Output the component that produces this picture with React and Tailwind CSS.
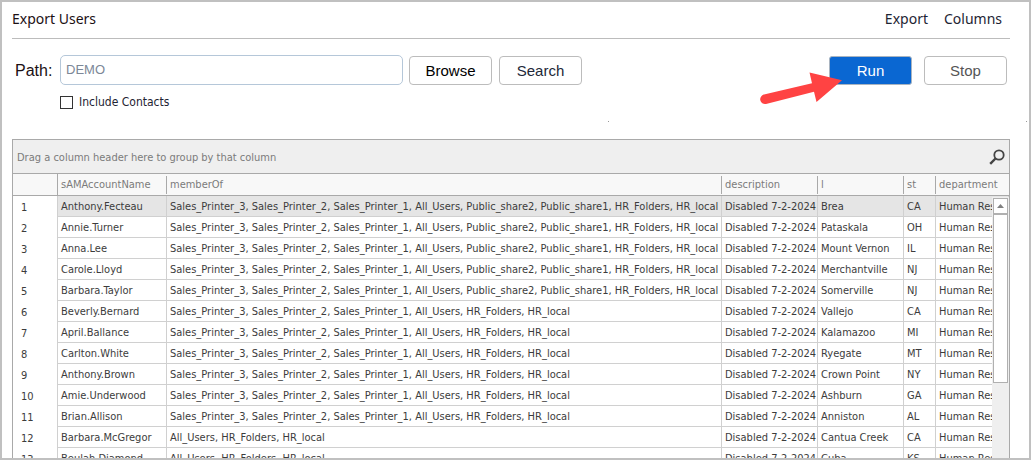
import React from 'react';

const PRINTERS = 'Sales_Printer_3, Sales_Printer_2, Sales_Printer_1, All_Users, ';
const HR = 'HR_Folders, HR_local';
const FULL = `${PRINTERS}Public_share2, Public_share1, ${HR}`;
const STAFF = `${PRINTERS}${HR}`;
const BASIC = `All_Users, ${HR}`;

const users = [
  { name: 'Anthony.Fecteau', memberOf: FULL, city: 'Brea', st: 'CA' },
  { name: 'Annie.Turner', memberOf: FULL, city: 'Pataskala', st: 'OH' },
  { name: 'Anna.Lee', memberOf: FULL, city: 'Mount Vernon', st: 'IL' },
  { name: 'Carole.Lloyd', memberOf: FULL, city: 'Merchantville', st: 'NJ' },
  { name: 'Barbara.Taylor', memberOf: FULL, city: 'Somerville', st: 'NJ' },
  { name: 'Beverly.Bernard', memberOf: STAFF, city: 'Vallejo', st: 'CA' },
  { name: 'April.Ballance', memberOf: STAFF, city: 'Kalamazoo', st: 'MI' },
  { name: 'Carlton.White', memberOf: STAFF, city: 'Ryegate', st: 'MT' },
  { name: 'Anthony.Brown', memberOf: STAFF, city: 'Crown Point', st: 'NY' },
  { name: 'Amie.Underwood', memberOf: STAFF, city: 'Ashburn', st: 'GA' },
  { name: 'Brian.Allison', memberOf: STAFF, city: 'Anniston', st: 'AL' },
  { name: 'Barbara.McGregor', memberOf: BASIC, city: 'Cantua Creek', st: 'CA' },
  { name: 'Beulah.Diamond', memberOf: BASIC, city: 'Cuba', st: 'KS' },
];

const columns = ['sAMAccountName', 'memberOf', 'description', 'l', 'st', 'department'];

const ArrowPointer = () => (
  <svg className="absolute -left-[70px] top-[14px] w-[86px] h-9 pointer-events-none" viewBox="0 0 86 36" aria-hidden="true">
    <path
      d="M5 24.6 L53 13.2 L50.5 2.5 L83 10.3 L57.5 32 L55 21.8 L7 34 A4.8 4.8 0 0 1 5 24.6 Z"
      fill="#ff4343"
    />
  </svg>
);

const Cell = ({ children }) => (
  <td className="h-[21px] border-r border-b border-[#d0d0d0] px-[3px] pt-0.5 pb-0 whitespace-nowrap overflow-hidden">
    {children}
  </td>
);

const Toolbar = () => (
  <div className="flex items-start pl-[3px] pr-[3px] pt-4 font-['Liberation_Sans',Arial,sans-serif]">
    <label htmlFor="path" className="w-[45px] shrink-0 text-[16px] leading-[32px] text-[#1c1014]">
      Path:
    </label>
    <div className="w-[343px] shrink-0">
      <input
        id="path"
        type="text"
        defaultValue="DEMO"
        className="block w-full h-[30px] rounded-[5px] border border-[#b5c7d9] bg-white px-[5px] pb-0.5 text-[13px] text-[#7c8797] outline-none"
      />
      <label className="mt-2 flex items-center gap-1.5 h-[18px] text-[12px] text-[#1e2433] font-['DejaVu_Sans_Condensed','Noto_Sans',sans-serif]">
        <input type="checkbox" className="appearance-none w-[13px] h-[13px] border border-[#333] bg-white checked:bg-[#0a67d2]" />
        Include Contacts
      </label>
    </div>
    <button type="button" className="ml-1.5 mt-px w-[83px] h-[29px] shrink-0 rounded-[4px] border border-[#bcbcbc] bg-white pt-0.5 text-[15px] text-black">
      Browse
    </button>
    <button type="button" className="ml-[7px] mt-px w-[83px] h-[29px] shrink-0 rounded-[4px] border border-[#bcbcbc] bg-white pt-0.5 text-[15px] text-[#222838]">
      Search
    </button>
    <div className="relative ml-auto mt-px shrink-0">
      <button type="button" className="block w-[83px] h-[29px] rounded-[3px] border border-[#a9b4c0] bg-[#0a67d2] pt-0.5 text-[15px] text-white">
        Run
      </button>
      <ArrowPointer />
    </div>
    <button type="button" className="ml-3 mt-px w-[83px] h-[29px] shrink-0 rounded-[4px] border border-[#bcbcbc] bg-white pt-0.5 text-[15px] text-[#555]">
      Stop
    </button>
  </div>
);

const Scrollbar = () => (
  <div className="absolute right-0 top-[23px] bottom-0 w-[17px] bg-[#efefef] flex flex-col items-center pt-px">
    <button type="button" aria-label="Scroll up" className="w-[15px] h-4 shrink-0 border border-[#b0b0b0] bg-white flex items-center justify-center">
      <svg viewBox="0 0 7 4" className="w-[7px] h-1" aria-hidden="true">
        <path d="M3.5 0 L7 4 H0 Z" fill="#808080" />
      </svg>
    </button>
    <div className="w-[15px] h-[169px] shrink-0 border border-[#b0b0b0] bg-white" />
  </div>
);

const UserGrid = () => (
  <div className="flex-1 min-h-0 flex flex-col border border-b-0 border-[#a9a9a9] font-['DejaVu_Sans_Condensed','Noto_Sans',sans-serif] text-[11px] leading-[16px]">
    <div className="h-[34px] shrink-0 flex items-center justify-between pl-1 pr-1 bg-[#efefef] border-b border-[#a9a9a9] text-[#7b7b7b]">
      <span className="pt-0.5">Drag a column header here to group by that column</span>
      <button type="button" aria-label="Search rows">
        <svg viewBox="0 0 16 16" className="w-4 h-4" fill="none" stroke="#444" aria-hidden="true">
          <circle cx="10" cy="6" r="4.7" strokeWidth="1.8" />
          <path d="M6.5 9.5 L1.2 14.8" strokeWidth="2.4" />
        </svg>
      </button>
    </div>
    <div className="relative flex-1 min-h-0 overflow-hidden">
      <table className="w-full table-fixed border-separate border-spacing-0">
        <colgroup>
          <col className="w-[45px]" />
          <col className="w-[109px]" />
          <col />
          <col className="w-[96px]" />
          <col className="w-[86px]" />
          <col className="w-8" />
          <col className="w-[73px]" />
        </colgroup>
        <thead>
          <tr className="bg-[#f8f8f8] text-[#7b7b7b]">
            <th className="h-[22px] p-0 border-r border-b border-[#a9a9a9]" aria-label="Row" />
            {columns.map((column) => (
              <th key={column} scope="col" className="h-[22px] p-0 border-b border-[#a9a9a9] font-normal text-left">
                <div className={`h-[18px] px-[3px] leading-[18px] ${column === 'department' ? '' : 'border-r border-[#a9a9a9]'}`}>{column}</div>
              </th>
            ))}
          </tr>
        </thead>
        <tbody className="text-[#3c3c3c]">
          {users.map((user, i) => (
            <tr key={user.name} className={i === 0 ? 'bg-[#e5e5e5]' : 'bg-white'}>
              <th scope="row" className="h-[21px] pt-0.5 pb-0 pl-2 pr-0 bg-white border-r border-[#d0d0d0] font-normal text-left">
                {i + 1}
              </th>
              <Cell>{user.name}</Cell>
              <Cell>{user.memberOf}</Cell>
              <Cell>Disabled 7-2-2024</Cell>
              <Cell>{user.city}</Cell>
              <Cell>{user.st}</Cell>
              <Cell>Human Resources</Cell>
            </tr>
          ))}
        </tbody>
      </table>
      <Scrollbar />
    </div>
  </div>
);

const App = () => (
  <main className="h-screen overflow-hidden flex flex-col bg-white border-2 border-[#c0c0c0] pl-2.5 pr-[19px]">
    <header className="h-[37px] shrink-0 flex items-center justify-between pr-2 pb-1 border-b border-[#bcbcbc] font-['Noto_Sans',sans-serif] text-[14px] text-[#1e2433]">
      <h1 className="text-[#1c1014]">Export Users</h1>
      <nav className="flex gap-4">
        <a href="#export">Export</a>
        <a href="#columns">Columns</a>
      </nav>
    </header>
    <Toolbar />
    <div className="h-7 shrink-0 flex items-start justify-between pt-2.5 pl-[596px] -mr-[17px]">
      <span className="w-px h-px bg-[#999]" />
      <span className="w-px h-px bg-[#999]" />
    </div>
    <UserGrid />
  </main>
);

export default App;
